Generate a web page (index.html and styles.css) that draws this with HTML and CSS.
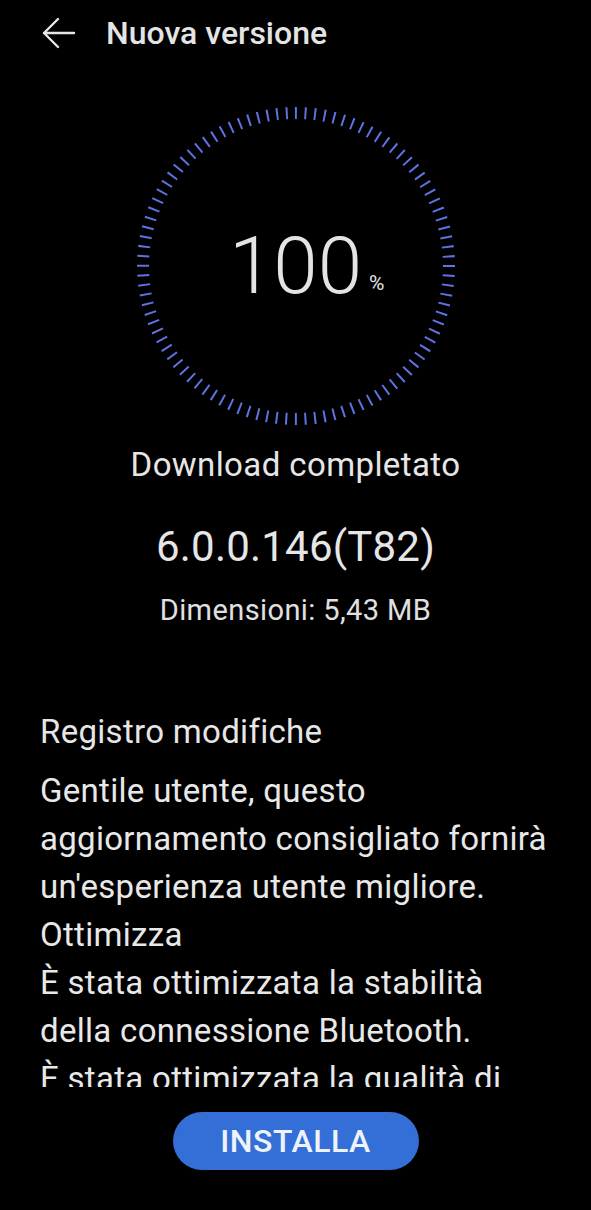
FILE: index.html
```html
<!DOCTYPE html>
<html lang="it">
<head>
  <meta charset="UTF-8">
  <title>Nuova versione</title>
  <link rel="stylesheet" href="styles.css">
</head>
<body>
<div class="screen">
  <div class="header">
    <svg class="back" width="36" height="36" viewBox="0 0 36 36">
      <path d="M34 18H4M18 4L4 18L18 32" fill="none" stroke="#e6e6e6" stroke-width="2.4" stroke-linecap="round" stroke-linejoin="round"/>
    </svg>
    <h1>Nuova versione</h1>
  </div>

  <div class="dial">
    <svg width="320" height="320" viewBox="0 0 320 320">
      <!-- 100 ticks: circumference 2*pi*153 = 961.33, one tick every 9.613 -->
      <circle cx="160" cy="160" r="153" fill="none" stroke="#5d73e2" stroke-width="12" stroke-dasharray="2 7.6133" transform="rotate(-90.4 160 160)"/>
    </svg>
    <div class="value"><span class="num">100<span class="pct">%</span></span></div>
  </div>

  <div class="status">Download completato</div>
  <div class="version">6.0.0.146(T82)</div>
  <div class="size">Dimensioni: 5,43 MB</div>

  <div class="changelog">
    <div class="log-title">Registro modifiche</div>
    <div class="log-body">
      Gentile utente, questo aggiornamento consigliato fornirà un'esperienza utente migliore.<br>
      Ottimizza<br>
      È stata ottimizzata la stabilità della connessione Bluetooth.<br>
      È stata ottimizzata la qualità di chiamata in alcuni scenari.
    </div>
  </div>

  <div class="actions">
    <button class="install">INSTALLA</button>
  </div>
</div>
</body>
</html>
```

FILE: styles.css
```css
html, body { margin: 0; padding: 0; background: #000; }
body { font-family: Roboto, "Noto Sans", sans-serif; color: #e8e8e8; }
.screen { width: 591px; height: 1210px; display: flex; flex-direction: column; overflow: hidden; }

.header { height: 66px; display: flex; align-items: center; padding-left: 40px; }
.back { display: block; }
.header h1 { margin: 0 0 0 30px; font-size: 32px; font-weight: 500; line-height: 66px; color: #e4e4e4; }

.dial { position: relative; width: 320px; height: 320px; margin: 40px auto 0; }
.dial svg { display: block; }
.value { position: absolute; inset: 0; display: flex; align-items: center; justify-content: center; }
.num { position: relative; font-size: 80px; font-weight: 300; line-height: 80px; color: #e4e4e4; }
.pct { position: absolute; left: 100%; bottom: 0; margin-left: 7px; font-size: 21px; line-height: 1; font-weight: 400; padding-bottom: 12px; }

.status { margin-top: 19px; text-align: center; font-size: 33px; line-height: 40px; letter-spacing: 0.4px; color: #e6e6e6; }
.version { margin-top: 37px; text-align: center; font-size: 42px; line-height: 50px; letter-spacing: 0.2px; color: #e6e6e6; }
.size { margin-top: 20px; text-align: center; font-size: 29px; line-height: 36px; letter-spacing: 0.4px; color: #e0e0e0; }

.changelog { margin-top: 84px; padding: 0 40px; height: 375px; overflow: hidden; }
.log-title { font-size: 33px; line-height: 40px; letter-spacing: 0.3px; color: #e6e6e6; }
.log-body { margin-top: 15px; font-size: 33px; line-height: 48px; letter-spacing: 0.3px; color: #e8e8e8; }

.actions { display: flex; justify-content: center; margin-top: 25px; }
.install { width: 246px; height: 58px; border: none; border-radius: 29px; background: #336fd6; color: #eef2fb; font-family: Roboto, sans-serif; font-size: 32px; font-weight: 500; letter-spacing: 0.5px; }
```
